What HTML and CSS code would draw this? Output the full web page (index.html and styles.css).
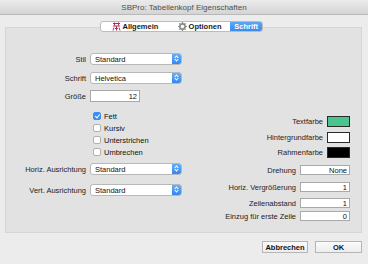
FILE: index.html
```html
<!DOCTYPE html>
<html lang="de">
<head>
    <meta charset="UTF-8">
    <title>SBPro: Tabellenkopf Eigenschaften</title>
    <link rel="stylesheet" href="styles.css">
</head>
<body>
    <div class="window">
        <div class="titlebar">SBPro: Tabellenkopf Eigenschaften</div>
        <div class="content">
            <div class="tabs">
                <div class="tab">
                    <svg class="tab-icon" width="9" height="9" viewBox="0 0 9 9">
                        <path d="M1 1.5h7M2.5 0.5v3M6.5 0.5v3M1 4h7M4.5 4v4.5M2 5.5l-1 3M7 5.5l1 3M3 6.5h3" stroke="#a8305e" stroke-width="1" fill="none"/>
                    </svg>
                    Allgemein
                </div>
                <div class="tab">
                    <svg class="tab-icon" width="9" height="9" viewBox="0 0 9 9">
                        <circle cx="4.5" cy="4.5" r="2.6" fill="none" stroke="#8a8a8a" stroke-width="1.6"/>
                        <path d="M4.5 0v2M4.5 7v2M0 4.5h2M7 4.5h2M1.3 1.3l1.4 1.4M6.3 6.3l1.4 1.4M1.3 7.7l1.4-1.4M6.3 2.7l1.4-1.4" stroke="#8a8a8a" stroke-width="1.2"/>
                    </svg>
                    Optionen
                </div>
                <div class="tab selected">Schrift</div>
            </div>

            <div class="panel">
                <div class="left-col">
                    <div class="row row-stil">
                        <span class="label">Stil</span>
                        <div class="popup"><span>Standard</span><span class="stepper"></span></div>
                    </div>
                    <div class="row row-schrift">
                        <span class="label">Schrift</span>
                        <div class="popup"><span>Helvetica</span><span class="stepper"></span></div>
                    </div>
                    <div class="row row-groesse">
                        <span class="label">Größe</span>
                        <div class="field short">12</div>
                    </div>
                    <div class="checks">
                        <div class="check-row"><span class="checkbox checked"></span>Fett</div>
                        <div class="check-row"><span class="checkbox"></span>Kursiv</div>
                        <div class="check-row"><span class="checkbox"></span>Unterstrichen</div>
                        <div class="check-row"><span class="checkbox"></span>Umbrechen</div>
                    </div>
                    <div class="row row-horiz">
                        <span class="label">Horiz. Ausrichtung</span>
                        <div class="popup"><span>Standard</span><span class="stepper"></span></div>
                    </div>
                    <div class="row row-vert">
                        <span class="label">Vert. Ausrichtung</span>
                        <div class="popup"><span>Standard</span><span class="stepper"></span></div>
                    </div>
                </div>

                <div class="right-col">
                    <div class="rrow r-text">
                        <span class="label">Textfarbe</span>
                        <span class="well" style="background: #4cc48e;"></span>
                    </div>
                    <div class="rrow r-bg">
                        <span class="label">Hintergrundfarbe</span>
                        <span class="well" style="background: #ffffff;"></span>
                    </div>
                    <div class="rrow r-rahmen">
                        <span class="label">Rahmenfarbe</span>
                        <span class="well" style="background: #000000;"></span>
                    </div>
                    <div class="rrow r-dreh">
                        <span class="label">Drehung</span>
                        <div class="field">None</div>
                    </div>
                    <div class="rrow r-vergr">
                        <span class="label">Horiz. Vergrößerung</span>
                        <div class="field">1</div>
                    </div>
                    <div class="rrow r-zeile">
                        <span class="label">Zeilenabstand</span>
                        <div class="field">1</div>
                    </div>
                    <div class="rrow r-einzug">
                        <span class="label">Einzug für erste Zeile</span>
                        <div class="field">0</div>
                    </div>
                </div>
            </div>

            <div class="buttons">
                <button class="btn">Abbrechen</button>
                <button class="btn">OK</button>
            </div>
        </div>
    </div>
</body>
</html>
```

FILE: styles.css
```css
html, body {
    margin: 0;
    padding: 0;
    background: #ffffff;
}
body {
    font-family: "Liberation Sans", Arial, sans-serif;
    font-size: 7.5px;
    color: #222;
}
.window {
    width: 368px;
    height: 264px;
    background: #ececec;
}
.titlebar {
    height: 15px;
    line-height: 15px;
    text-align: center;
    font-size: 8px;
    color: #4e4e4e;
    background: linear-gradient(#ebebeb, #d4d4d4);
    border-bottom: 1px solid #b9b9b9;
    box-sizing: border-box;
}
.content {
    padding: 6px 6px 0 5px;
}

/* tabs */
.tabs {
    position: relative;
    z-index: 1;
    display: flex;
    width: 163px;
    height: 11px;
    margin-left: 95px;
    background: #ffffff;
    border: 1px solid #bcbcbc;
    border-radius: 3px;
    box-sizing: border-box;
    overflow: hidden;
}
.tab {
    display: flex;
    align-items: center;
    justify-content: center;
    gap: 2px;
    font-weight: bold;
    font-size: 7.5px;
    color: #1a1a1a;
    padding: 0 4px;
}
.tab:nth-child(1) { width: 64px; }
.tab:nth-child(2) { width: 57px; }
.tab.selected {
    flex: 1;
    background: linear-gradient(#5ea6f4, #3a8ae8);
    color: #ffffff;
}
.tab-icon {
    flex: none;
}

/* panel */
.panel {
    display: flex;
    height: 206px;
    margin-top: -5px;
    background: #e2e2e2;
    border: 1px solid #d6d6d6;
    box-sizing: border-box;
}
.left-col {
    width: 181px;
    padding-top: 25px;
}
.row {
    display: flex;
    align-items: center;
    height: 12px;
}
.row .label {
    width: 84px;
    text-align: right;
    padding-right: 4px;
    box-sizing: border-box;
    white-space: nowrap;
}
.row-schrift { margin-top: 7px; }
.row-groesse { margin-top: 6px; }
.row-horiz { margin-top: 5px; }
.row-vert { margin-top: 9px; }

.popup {
    display: flex;
    align-items: center;
    justify-content: space-between;
    width: 92px;
    height: 12px;
    background: #ffffff;
    border: 1px solid #b8b8b8;
    border-radius: 3px;
    box-sizing: border-box;
    padding-left: 4px;
    overflow: hidden;
    color: #111;
}
.stepper {
    width: 9px;
    height: 12px;
    background: linear-gradient(#6cb2f8, #2f83ef);
    position: relative;
}
.stepper::before, .stepper::after {
    content: "";
    position: absolute;
    left: 3px;
    width: 2px;
    height: 2px;
    border-left: 1px solid #fff;
    border-top: 1px solid #fff;
}
.stepper::before {
    top: 3px;
    transform: rotate(45deg);
}
.stepper::after {
    top: 5px;
    transform: rotate(225deg);
}

.field {
    width: 50px;
    height: 10px;
    line-height: 9px;
    background: #ffffff;
    border: 1px solid #a9a9a9;
    box-sizing: border-box;
    text-align: right;
    padding-right: 2px;
    color: #111;
}
.field.short {
    width: 50px;
    height: 12px;
    line-height: 11px;
}

.checks {
    margin-top: 8px;
    padding-left: 87px;
}
.check-row {
    display: flex;
    align-items: center;
    gap: 3px;
    height: 12px;
    color: #111;
}
.checkbox {
    width: 8px;
    height: 8px;
    background: #ffffff;
    border: 1px solid #b0b0b0;
    border-radius: 2px;
    box-sizing: border-box;
    position: relative;
}
.checkbox.checked {
    background: #3d8ef0;
    border-color: #3d8ef0;
}
.checkbox.checked::after {
    content: "";
    position: absolute;
    left: 2px;
    top: 0;
    width: 2px;
    height: 4px;
    border-right: 1px solid #fff;
    border-bottom: 1px solid #fff;
    transform: rotate(40deg);
}

/* right column */
.right-col {
    flex: 1;
    display: flex;
    flex-direction: column;
    align-items: flex-end;
    padding-top: 88px;
    padding-right: 11px;
}
.rrow {
    display: flex;
    align-items: center;
    gap: 4px;
    white-space: nowrap;
}
.well {
    display: block;
    width: 23px;
    height: 11px;
    border: 1px solid #2a2a2a;
    box-sizing: border-box;
}
.r-bg { margin-top: 5px; }
.r-rahmen { margin-top: 4px; }
.r-dreh { margin-top: 7px; }
.r-vergr { margin-top: 7px; }
.r-zeile { margin-top: 6px; }
.r-einzug { margin-top: 3px; }

/* buttons */
.buttons {
    display: flex;
    justify-content: flex-end;
    gap: 7px;
    margin-top: 8px;
}
.btn {
    width: 46px;
    height: 12px;
    padding: 0;
    font-family: "Liberation Sans", Arial, sans-serif;
    font-size: 7.5px;
    font-weight: bold;
    color: #111;
    background: linear-gradient(#fbfbfb, #ededed);
    border: 1px solid #b5b5b5;
    border-radius: 0;
}
.btn + .btn {
    width: 47px;
}
```
